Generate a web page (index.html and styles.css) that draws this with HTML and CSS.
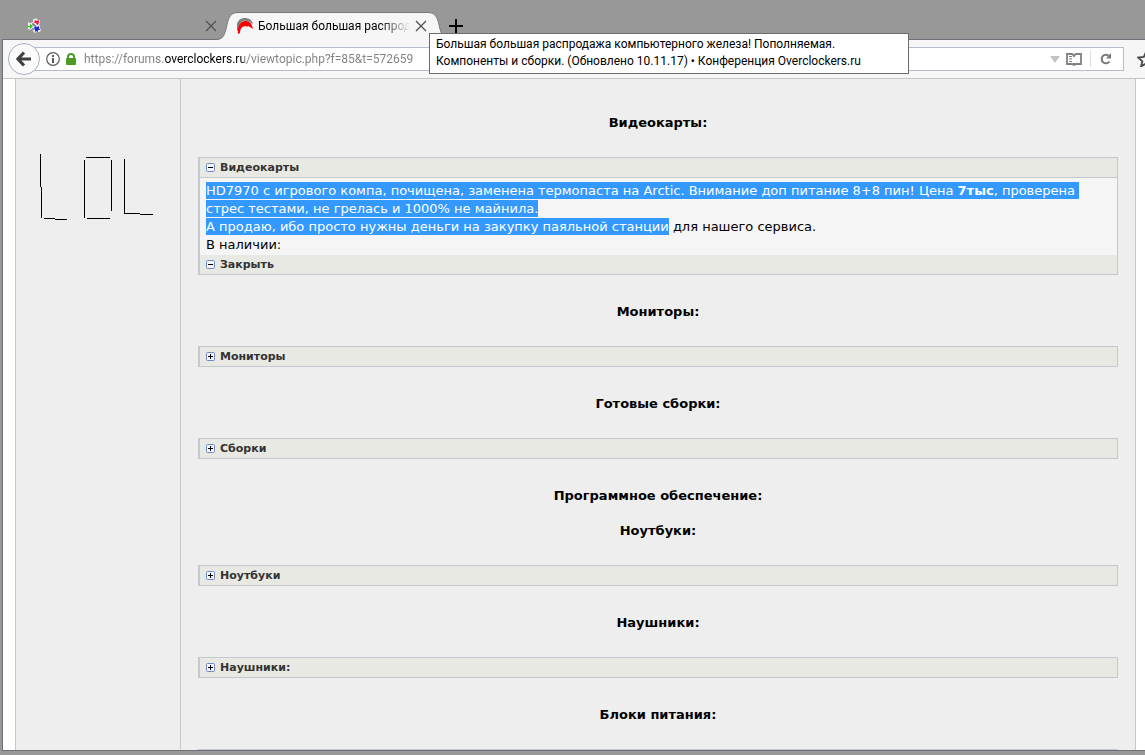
FILE: index.html
```html
<!DOCTYPE html>
<html lang="ru">
<head>
<meta charset="utf-8">
<meta name="viewport" content="width=device-width, initial-scale=1">
<title>Большая большая распродажа компьютерного железа!</title>
<link rel="stylesheet" href="styles.css">
</head>
<body class="window">
<header class="tabs">
  <div class="tab">
    <svg class="favicon" width="14" height="16" viewBox="0 0 14 16" aria-hidden="true">
      <path d="M6 1h2l1-1 2 2h2v3l-1 2 1 1v2l1 2-1 2h-3l-2 1-2-2-1-2H4v1L2 11l-1 1V4l2 1h1l2-1z" fill="#e9e9ee"/>
      <path d="M8 2l2 1 2-1v3l-2 2-1-2H7z" fill="#e8203c"/>
      <path d="M1 8h2V6l3 2-3 3V9H1z" fill="#2fc414"/>
      <path d="M8 8l2 1 2-1v2l1 2h-2v2l-2-1-1 1v-2l-1-2z" fill="#1b2fd0"/>
      <path d="M6 5v2h2v1M6 10v2M10 6h1" stroke="#4c4c60" fill="none"/>
    </svg>
    <button class="icon-btn" aria-label="Закрыть вкладку">
      <svg width="12" height="12" viewBox="0 0 12 12"><path d="M1 1l10 10M11 1L1 11" stroke="#505050" stroke-width="1.3" fill="none"/></svg>
    </button>
  </div>
  <div class="tab tab-active">
    <svg class="tab-shape" width="241" height="28" viewBox="0 0 241 28" aria-hidden="true">
      <path d="M0 28C8 28 9 24 11 17C13 8 14 .5 23 .5H213C222 .5 223 8 225 17C227 24 229 28 240 28Z" fill="#f6f6f6"/>
      <path d="M0 27.500C8 27.500 9 24 11 17C13 8 14 .5 23 .5H213C222 .5 223 8 225 17C227 24 229 27.500 240 27.500" fill="none" stroke="#75787e"/>
    </svg>
    <svg class="favicon" width="16" height="16" viewBox="0 0 16 16" aria-hidden="true">
      <path d="M0 13V6C1 2 4 0 8 0c4 0 7 2 8 6l-2-1C11 2 5 2 3 6L1 13z" fill="#808080"/>
      <path d="M1 16V11C2 5 5 3 9 3c4 0 6 3 7 8l-3-2-2-1-1 1-1-1C5 8 3 11 3 15z" fill="#f00"/>
    </svg>
    <span class="tab-title">Большая большая распродажа</span>
    <button class="icon-btn" aria-label="Закрыть вкладку">
      <svg width="12" height="12" viewBox="0 0 12 12"><path d="M1 1l10 10M11 1L1 11" stroke="#505050" stroke-width="1.3" fill="none"/></svg>
    </button>
  </div>
  <button class="icon-btn new-tab" aria-label="Новая вкладка">
    <svg width="14" height="14" viewBox="0 0 14 14"><path d="M7 0v14M0 7h14" stroke="#000" stroke-width="2" fill="none"/></svg>
  </button>
  <div class="tooltip" role="tooltip">Большая большая распродажа компьютерного железа! Пополняемая.<br>Компоненты и сборки. (Обновлено 10.11.17) • Конференция Overclockers.ru</div>
</header>

<div class="frame">
  <nav class="toolbar">
    <button class="back" aria-label="Назад">
      <svg width="16" height="16" viewBox="0 0 16 16"><path d="M8 1.500L2 8l6 6.500M2 8h13" stroke="#404040" stroke-width="3.200" fill="none"/></svg>
    </button>
    <div class="urlbar">
      <svg width="14" height="14" viewBox="0 0 14 14" aria-hidden="true"><circle cx="7" cy="7" r="6.300" fill="none" stroke="#5b5b5b" stroke-width="1.200"/><path d="M6 3h2v2H6zM6 6h2v5H6z" fill="#5b5b5b"/></svg>
      <svg width="10" height="12" viewBox="0 0 10 12" aria-hidden="true"><path d="M2 6V4a3 3 0 0 1 6 0v2" fill="none" stroke="#4d9a26" stroke-width="2"/><rect y="5" width="10" height="7" rx="1" fill="#4d9a26"/></svg>
      <input class="url" type="text" aria-label="Адрес" value="https://forums.overclockers.ru/viewtopic.php?f=85&amp;t=572659">
      <button class="icon-btn" aria-label="История">
        <svg width="10" height="7" viewBox="0 0 10 7"><path d="M0 0h10L5 7z" fill="#c4c4c4"/></svg>
      </button>
      <button class="icon-btn" aria-label="Режим чтения">
        <svg width="16" height="13" viewBox="0 0 16 13"><path d="M1 1h5l2 1.500L10 1h5v10h-5l-2 1-2-1H1zM8 2v2M8 10v2" fill="none" stroke="#808080" stroke-width="1.800"/><path d="M3 3.500h3M3 6h3M3 8.500h3" stroke="#808080"/></svg>
      </button>
      <span class="divider"></span>
      <button class="icon-btn" aria-label="Обновить">
        <svg width="12" height="12" viewBox="0 0 12 12"><path d="M9.500 8.500A4.300 4.300 0 1 1 9 3" fill="none" stroke="#7a7a7a" stroke-width="2"/><path d="M11 0v5.500H6z" fill="#7a7a7a"/></svg>
      </button>
    </div>
    <button class="icon-btn star" aria-label="Добавить в закладки">
      <svg width="18" height="16" viewBox="0 0 18 16"><path d="M9 1l2.200 5 5.800.5-4.400 3.700L14 15.500 9 12.500l-5 3 1.400-5.300L1 6.500 6.800 6z" fill="none" stroke="#4a4a4a" stroke-width="1.800"/></svg>
    </button>
  </nav>

  <main class="page">
    <div class="post">
      <aside class="profile">
        <svg width="114" height="66" viewBox="0 0 114 66" role="img" aria-label="LOL" shape-rendering="crispEdges">
          <path d="M0 0h1v33H0zM1 33h1v31H1zM4 64h11v1H4zM15 65h12v1H15zM46 3h24v1H46zM44 6h1v58h-1zM71 6h1v51h-1zM47 64h23v1H47zM84 5h1v55h-1zM84 59h16v1H84zM100 60h13v1h-13z"/>
        </svg>
      </aside>
      <article class="body">
        <h2 class="title">Видеокарты:</h2>
        <section class="spoiler">
          <button class="bar bar-open"><svg width="9" height="9" viewBox="0 0 9 9"><rect x=".5" y=".5" width="8" height="8" rx="1" fill="#f2f5ff" stroke="#7387c0"/><path d="M2 4.500h5" stroke="#000"/></svg>Видеокарты</button>
          <p class="text"><mark class="selected">HD7970 с игрового компа, почищена, заменена термопаста на Arctic. Внимание доп питание 8+8 пин! Цена <b>7тыс</b>, проверена&nbsp;<br>стрес тестами, не грелась и 1000% не майнила.<br>А продаю, ибо просто нужны деньги на закупку паяльной станции</mark> для нашего сервиса.<br>В наличии:</p>
          <button class="bar"><svg width="9" height="9" viewBox="0 0 9 9"><rect x=".5" y=".5" width="8" height="8" rx="1" fill="#f2f5ff" stroke="#7387c0"/><path d="M2 4.500h5" stroke="#000"/></svg>Закрыть</button>
        </section>
        <h2 class="title">Мониторы:</h2>
        <section class="spoiler">
          <button class="bar"><svg width="9" height="9" viewBox="0 0 9 9"><rect x=".5" y=".5" width="8" height="8" rx="1" fill="#f2f5ff" stroke="#7387c0"/><path d="M2 4.500h5M4.500 2v5" stroke="#000"/></svg>Мониторы</button>
        </section>
        <h2 class="title">Готовые сборки:</h2>
        <section class="spoiler">
          <button class="bar"><svg width="9" height="9" viewBox="0 0 9 9"><rect x=".5" y=".5" width="8" height="8" rx="1" fill="#f2f5ff" stroke="#7387c0"/><path d="M2 4.500h5M4.500 2v5" stroke="#000"/></svg>Сборки</button>
        </section>
        <h2 class="title title-empty">Программное обеспечение:</h2>
        <h2 class="title">Ноутбуки:</h2>
        <section class="spoiler">
          <button class="bar"><svg width="9" height="9" viewBox="0 0 9 9"><rect x=".5" y=".5" width="8" height="8" rx="1" fill="#f2f5ff" stroke="#7387c0"/><path d="M2 4.500h5M4.500 2v5" stroke="#000"/></svg>Ноутбуки</button>
        </section>
        <h2 class="title">Наушники:</h2>
        <section class="spoiler">
          <button class="bar"><svg width="9" height="9" viewBox="0 0 9 9"><rect x=".5" y=".5" width="8" height="8" rx="1" fill="#f2f5ff" stroke="#7387c0"/><path d="M2 4.500h5M4.500 2v5" stroke="#000"/></svg>Наушники:</button>
        </section>
        <h2 class="title">Блоки питания:</h2>
        <section class="spoiler">
          <button class="bar" aria-label="Развернуть"></button>
        </section>
      </article>
    </div>
  </main>
</div>
</body>
</html>
```
FILE: styles.css
```css
* { box-sizing: border-box; }

.window {
  margin: 0;
  height: 100vh;
  padding-bottom: 4px;
  display: flex;
  flex-direction: column;
  overflow: hidden;
  background: #989898;
  color: #000;
  font-family: "Segoe UI", Roboto, "Open Sans", sans-serif;
  font-size: 12px;
}

button {
  font: inherit;
  color: inherit;
  border: 0;
  padding: 0;
  background: none;
}

svg { display: block; flex: none; }

.icon-btn { display: flex; flex: none; }

/* Tab strip */
.tabs {
  position: relative;
  flex: none;
  display: flex;
  align-items: flex-end;
  height: 39px;
  padding-left: 12px;
}

.tab {
  position: relative;
  display: flex;
  align-items: center;
  justify-content: space-between;
  width: 205px;
  height: 27px;
  padding-left: 15px;
}

.tab-active {
  z-index: 1;
  width: 210px;
  gap: 5px;
  padding-left: 20px;
}

.tab-shape {
  position: absolute;
  left: -2px;
  top: 0;
}

.tab-active .favicon,
.tab-active .icon-btn { position: relative; }

.tab-title {
  position: relative;
  flex: 1;
  overflow: hidden;
  white-space: nowrap;
  mask-image: linear-gradient(to right, #000 80%, transparent 100%);
}

.new-tab { margin: 0 0 6px 22px; }

.tooltip {
  position: absolute;
  z-index: 2;
  left: 429px;
  top: 33px;
  width: 480px;
  padding: 2px 6px 3px;
  border: 1px solid #6c6c6c;
  background: #fff;
  line-height: 17px;
  white-space: nowrap;
}

/* Browser frame */
.frame {
  flex: 1;
  min-height: 0;
  display: flex;
  flex-direction: column;
  margin-left: 2px;
  border: solid #6b6f78;
  border-width: 1px 0 1px 1px;
}

.toolbar {
  flex: none;
  display: flex;
  align-items: center;
  height: 39px;
  padding-left: 5px;
  border-bottom: 1px solid #c4c4c4;
  background: #f6f6f6;
  overflow: hidden;
}

.back {
  z-index: 1;
  flex: none;
  display: flex;
  align-items: center;
  justify-content: center;
  width: 32px;
  height: 32px;
  border: 1px solid #a9b0be;
  border-radius: 50%;
  background: #fbfbfb;
}

.urlbar {
  flex: 1;
  display: flex;
  align-items: center;
  gap: 6px;
  height: 24px;
  margin-left: -8px;
  padding: 0 11px 0 13px;
  border: 1px solid #b5bccb;
  background: #fff;
}

.url {
  flex: 1;
  min-width: 0;
  height: 22px;
  border: 0;
  padding: 0 0 0 2px;
  font: inherit;
  color: transparent;
  background: linear-gradient(to right, #808080 82px, #000 82px, #000 162px, #808080 162px);
  background-clip: text;
}

.divider {
  width: 1px;
  height: 16px;
  margin: 0 3px 0 2px;
  background: #ddd;
}

.star { margin: 0 -10px 0 13px; }

/* Forum page */
.page {
  flex: 1;
  min-height: 0;
  padding: 0 9px 0 12px;
  overflow: hidden;
  background: #fff;
  font-family: Verdana, "DejaVu Sans", sans-serif;
  font-size: 13px;
  line-height: 18px;
}

.post {
  display: flex;
  min-height: 100%;
  border: solid #c8c8c8;
  border-width: 0 1px;
  background: #eee;
}

.profile {
  flex: none;
  width: 165px;
  padding: 75px 0 0 24px;
  border-right: 1px solid #c8c8c8;
}

.body {
  flex: 1;
  min-width: 0;
  padding: 35px 17px 0;
}

.title {
  margin: 0 0 25px;
  font-size: 13px;
  line-height: 18px;
  text-align: center;
}

.title-empty { margin-bottom: 17px; }

.spoiler {
  margin-bottom: 28px;
  border: 1px solid #c3c9cf;
  border-left-width: 2px;
  background: #f5f5f5;
}

.bar {
  display: flex;
  align-items: center;
  gap: 5px;
  width: 100%;
  height: 19px;
  padding-left: 6px;
  background: #e9e9e4;
  color: #333;
  font-size: 11px;
  font-weight: bold;
  text-align: left;
}

.bar-open {
  height: 20px;
  border-bottom: 1px solid #c3c9cf;
}

.text {
  margin: 0;
  padding: 4px 6px 1px;
  white-space: nowrap;
}

.selected {
  padding: 1px 0;
  background: #39f;
  color: #fff;
}
```
